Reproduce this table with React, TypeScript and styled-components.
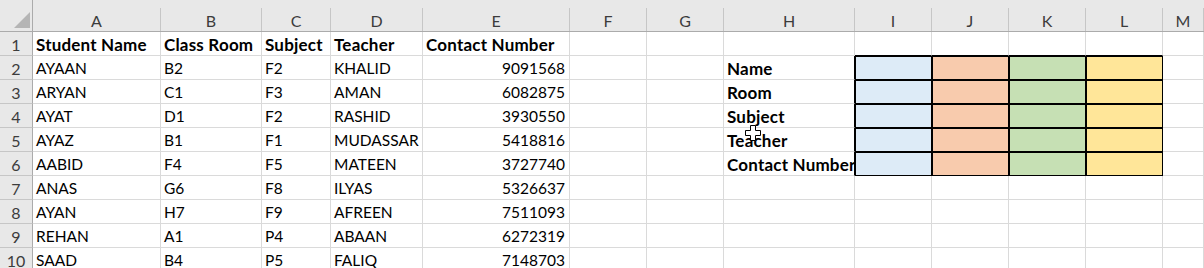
import React from "react";
import styled, { createGlobalStyle } from "styled-components";

const GlobalStyle = createGlobalStyle`
  html, body { margin: 0; padding: 0; background: #ffffff; overflow: hidden; }
  body { font-family: Lato, "Liberation Sans", sans-serif; }
`;

const COLS = [33, 128, 101, 69, 92, 147, 77, 77, 131, 77, 77, 77, 77];
const LETTERS = ["A", "B", "C", "D", "E", "F", "G", "H", "I", "J", "K", "L", "M"];

const GRID = "#dadada";
const HEAD_BG = "#e8e8e8";
const HEAD_LINE = "#c6c6c6";

const Frame = styled.div`
  position: relative;
  width: 1204px;
  height: 268px;
  overflow: hidden;
`;

const Sheet = styled.div`
  display: grid;
  grid-template-columns: ${COLS.map((c) => c + "px").join(" ")} 1fr;
  grid-template-rows: 32px;
  grid-auto-rows: 24px;
  font-family: Lato, "Liberation Sans", sans-serif;
  font-size: 16px;
  color: #000;
`;

const Corner = styled.div`
  background: ${HEAD_BG};
  border-right: 1px solid #ababab;
  border-bottom: 1px solid #ababab;
  box-sizing: border-box;
  padding: 12px 3px 3px 14px;
  line-height: 0;
`;

const ColHead = styled.div`
  background: ${HEAD_BG};
  border-bottom: 1px solid #ababab;
  box-sizing: border-box;
  padding-top: 8px;
  display: flex;
`;

const ColLabel = styled.div`
  flex: 1;
  display: flex;
  align-items: center;
  justify-content: center;
  border-right: 1px solid ${HEAD_LINE};
  color: #3c3c3c;
  font-size: 16px;
  padding-top: 1px;
`;

const RowHead = styled.div`
  background: ${HEAD_BG};
  border-right: 1px solid #ababab;
  border-bottom: 1px solid ${HEAD_LINE};
  box-sizing: border-box;
  display: flex;
  align-items: center;
  justify-content: center;
  color: #3c3c3c;
  font-size: 16px;
  padding-top: 1px;
`;

const Cell = styled.div<{
  $bg?: string;
  $bold?: boolean;
  $num?: boolean;
  $rb?: string;
  $bb?: string;
  $box?: boolean;
}>`
  box-sizing: border-box;
  background: ${(p) => p.$bg || "#ffffff"};
  border-right: 1px solid ${(p) => p.$rb || GRID};
  border-bottom: 1px solid ${(p) => p.$bb || GRID};
  box-shadow: ${(p) => (p.$box ? "inset 1px 1px 0 #000" : "none")};
  display: flex;
  align-items: center;
  justify-content: ${(p) => (p.$num ? "flex-end" : "flex-start")};
  padding: 1px ${(p) => (p.$num ? "4px" : "3px")} 0 3px;
  font-size: ${(p) => (p.$bold ? "17px" : "15.5px")};
  letter-spacing: ${(p) => (p.$bold ? "0.2px" : "0")};
  font-weight: ${(p) => (p.$bold ? 700 : 400)};
  white-space: nowrap;
  overflow: visible;
  position: relative;
  z-index: ${(p) => (p.$bold ? 1 : 0)};
`;

const Cursor = styled.svg`
  position: absolute;
  left: 745px;
  top: 125px;
  z-index: 5;
`;

const DATA: string[][] = [
  ["Student Name", "Class Room", "Subject", "Teacher", "Contact Number"],
  ["AYAAN", "B2", "F2", "KHALID", "9091568"],
  ["ARYAN", "C1", "F3", "AMAN", "6082875"],
  ["AYAT", "D1", "F2", "RASHID", "3930550"],
  ["AYAZ", "B1", "F1", "MUDASSAR", "5418816"],
  ["AABID", "F4", "F5", "MATEEN", "3727740"],
  ["ANAS", "G6", "F8", "ILYAS", "5326637"],
  ["AYAN", "H7", "F9", "AFREEN", "7511093"],
  ["REHAN", "A1", "P4", "ABAAN", "6272319"],
  ["SAAD", "B4", "P5", "FALIQ", "7148703"],
];

const LABELS = ["Name", "Room", "Subject", "Teacher", "Contact Number"];
const FILLS = ["#ddebf7", "#f8cbad", "#c6e0b4", "#ffe699"];

export default function App() {
  const rows: React.ReactNode[] = [];
  DATA.forEach((r, i) => {
    const rowNo = i + 1;
    const header = i === 0;
    const inBox = rowNo >= 2 && rowNo <= 6;
    rows.push(<RowHead key={`rh${i}`}>{rowNo}</RowHead>);
    r.forEach((v, j) =>
      rows.push(
        <Cell key={`c${i}-${j}`} $bold={header} $num={j === 4 && !header}>
          {v}
        </Cell>
      )
    );
    rows.push(<Cell key={`f${i}`} />);
    rows.push(<Cell key={`g${i}`} />);
    rows.push(
      <Cell key={`h${i}`} $bold $rb={inBox ? "#000" : undefined}>
        {inBox ? LABELS[rowNo - 2] : ""}
      </Cell>
    );
    for (let k = 0; k < 4; k++) {
      if (inBox) {
        rows.push(<Cell key={`b${i}-${k}`} $bg={FILLS[k]} $rb="#000" $bb="#000" $box />);
      } else {
        rows.push(<Cell key={`b${i}-${k}`} $bb={rowNo === 1 ? "#000" : undefined} />);
      }
    }
    rows.push(<Cell key={`m${i}`} />);
  });

  return (
    <Frame>
      <GlobalStyle />
      <Sheet>
        <Corner>
          <svg width="16" height="16" viewBox="0 0 16 16">
            <polygon points="16,0 16,16 0,16" fill="#b5b5b5" />
          </svg>
        </Corner>
        {LETTERS.map((l) => (
          <ColHead key={l}>
            <ColLabel>{l}</ColLabel>
          </ColHead>
        ))}
        {rows}
      </Sheet>
      <Cursor width="17" height="17" viewBox="0 0 17 17">
        <path
          d="M5.5 0.5 H10.5 V5.5 H15.5 V10.5 H10.5 V15.5 H5.5 V10.5 H0.5 V5.5 H5.5 Z"
          fill="#ffffff"
          stroke="#000"
          strokeWidth="1"
        />
      </Cursor>
    </Frame>
  );
}
